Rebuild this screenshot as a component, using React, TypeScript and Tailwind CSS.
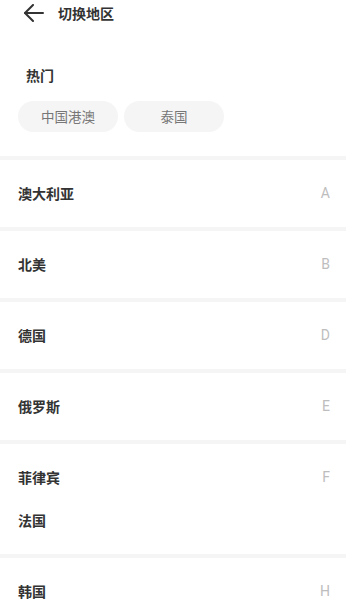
import React from "react";

const sections: { letter: string; items: string[] }[] = [
  { letter: "A", items: ["澳大利亚"] },
  { letter: "B", items: ["北美"] },
  { letter: "D", items: ["德国"] },
  { letter: "E", items: ["俄罗斯"] },
  { letter: "F", items: ["菲律宾", "法国"] },
  { letter: "H", items: ["韩国"] },
];

export default function App() {
  return (
    <div
      className="w-[346px] h-[606px] overflow-hidden bg-white"
      style={{ fontFamily: '"Noto Sans CJK SC", "Noto Sans", sans-serif' }}
    >
      <div className="flex items-center h-[26px] pl-[24px]">
        <svg width="20" height="18" viewBox="0 0 20 18" fill="none" stroke="#333" strokeWidth="2" strokeLinecap="round" strokeLinejoin="round">
          <path d="M9 1 1 9l8 8" />
          <path d="M1 9h18" />
        </svg>
        <span className="ml-[14px] text-[14px] font-bold text-[#333] leading-none">切换地区</span>
      </div>
      <div className="pt-[39px] pl-[26px] text-[14px] font-bold text-[#333] leading-[20px]">热门</div>
      <div className="flex gap-[6px] pl-[18px] pt-[16px] pb-[24px]">
        {["中国港澳", "泰国"].map((t) => (
          <div
            key={t}
            className="w-[100px] h-[31px] rounded-full bg-[#f5f5f5] flex items-center justify-center text-[13.5px] text-[#777]"
          >
            {t}
          </div>
        ))}
      </div>
      {sections.map((s) => (
        <div key={s.letter}>
          <div className="h-[4px] bg-[#f5f5f5]" />
          <div className="py-[12px]">
            {s.items.map((it, i) => (
              <div key={it} className="flex items-center justify-between h-[43px] pl-[18px] pr-[16px]">
                <span className="text-[14px] font-bold text-[#333]">{it}</span>
                {i === 0 && (
                  <span className="text-[14px] text-[#bdbdbd]" style={{ fontFamily: '"Roboto", sans-serif' }}>
                    {s.letter}
                  </span>
                )}
              </div>
            ))}
          </div>
        </div>
      ))}
    </div>
  );
}
